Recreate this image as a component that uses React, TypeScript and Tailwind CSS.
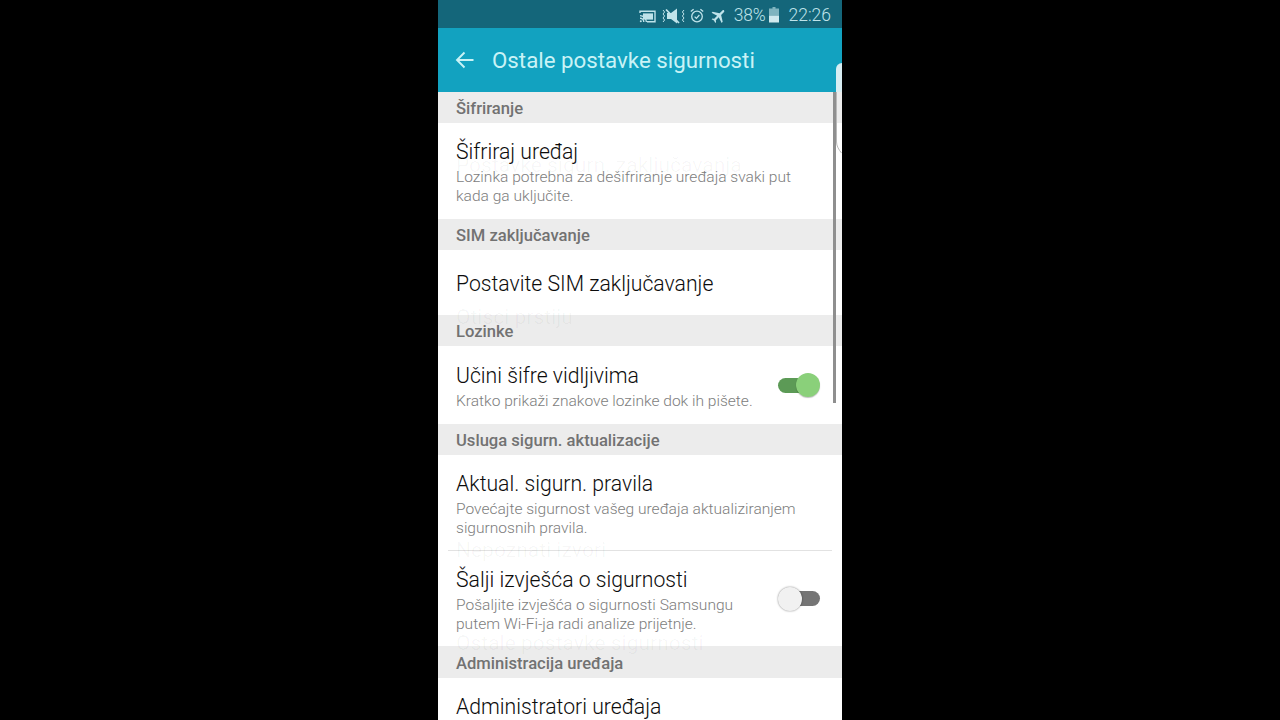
const font = "font-['Roboto',sans-serif]";

function SectionHeader({ label, height = "h-[31px]" }: { label: string; height?: string }) {
  return (
    <div className={`${height} flex items-center px-[18px] bg-[#ececec] text-[16.6px] font-medium text-[#727272] pt-[4px]`}>
      {label}
    </div>
  );
}

function Row({
  title,
  sub,
  height,
  toggle,
}: {
  title: string;
  sub?: string[];
  height: string;
  toggle?: "on" | "off";
}) {
  return (
    <div className={`${height} flex items-center justify-between pl-[18px] pr-[22px] bg-white`}>
      <div className="pt-[3px]">
        <div className="text-[21.2px] leading-[26px] text-[#0c0c0c] font-light">{title}</div>
        {sub && (
          <div className="text-[15.55px] leading-[19px] text-[#7d7d7d] mt-[3px] font-light">
            {sub.map((s) => (
              <div key={s}>{s}</div>
            ))}
          </div>
        )}
      </div>
      {toggle === "on" && (
        <div className="relative w-[42px] h-[24px] flex items-center">
          <div className="w-[38px] h-[15px] rounded-full bg-[#5c9a56]" />
          <div className="absolute right-0 top-0 w-[24px] h-[24px] rounded-full bg-[#8ad07a] shadow-[0_1px_1px_rgba(0,0,0,0.25)]" />
        </div>
      )}
      {toggle === "off" && (
        <div className="relative w-[42px] h-[24px] flex items-center justify-end">
          <div className="w-[38px] h-[15px] rounded-full bg-[#757575]" />
          <div className="absolute left-0 top-0 w-[24px] h-[24px] rounded-full bg-[#f1f1f1] shadow-[0_0_2px_rgba(0,0,0,0.5)]" />
        </div>
      )}
    </div>
  );
}

function StatusIcons() {
  return (
    <div className="flex items-center text-[#bfe3ea] pt-[2px]">
      {/* cast */}
      <svg width="17" height="13" viewBox="0 0 17 13" fill="none" stroke="currentColor" strokeWidth="1.4" className="mr-[6px] mt-[2px]">
        <path d="M1 3V1.2h15v10.6H8" />
        <rect x="4" y="3.4" width="10" height="6.2" fill="currentColor" stroke="none" />
        <path d="M1 5.6a6.4 6.4 0 0 1 6.4 6.4M1 8.2a3.8 3.8 0 0 1 3.8 3.8" />
        <circle cx="1.8" cy="11.2" r="1" fill="currentColor" stroke="none" />
      </svg>
      {/* vibrate off */}
      <svg width="23" height="16" viewBox="0 0 23 16" fill="none" stroke="currentColor" className="mr-[5px] mt-[1px]">
        <path d="M5 5h4l6-4.5v15L9 11H5z" fill="currentColor" stroke="none" />
        <path d="M4 1.5L17 15" strokeWidth="1.8" />
        <path d="M1 2l1.6 2L1 6l1.6 2L1 10l1.6 2L1 14M22 2l-1.6 2L22 6l-1.6 2L22 10l-1.6 2L22 14" strokeWidth="1" />
      </svg>
      {/* alarm */}
      <svg width="14" height="15" viewBox="0 0 14 15" fill="none" stroke="currentColor" strokeWidth="1.3" className="mr-[6px] mt-[1px]">
        <circle cx="7" cy="8.5" r="5.3" />
        <path d="M4.6 8.6l1.8 1.8 3-3.4M.8 3.6L3.6 1.2M13.2 3.6L10.4 1.2" />
      </svg>
      {/* airplane */}
      <svg width="18" height="18" viewBox="0 0 24 24" fill="currentColor" className="mr-[6px] mt-[1px] rotate-45">
        <path d="M21 16v-2l-8-5V3.5c0-.83-.67-1.5-1.5-1.5S10 2.67 10 3.5V9l-8 5v2l8-2.5V19l-2 1.5V22l3.5-1 3.5 1v-1.5L13 19v-5.5l8 2.5z" />
      </svg>
      <span className="text-[17.5px] tracking-[-0.2px] font-light">38%</span>
      {/* battery */}
      <svg width="10" height="16" viewBox="0 0 10 16" className="ml-[4px] mr-[9px]">
        <rect x="3.5" y="0" width="3" height="2" fill="#7fb4bf" />
        <rect x="0" y="1.5" width="10" height="7" fill="#7fb4bf" />
        <rect x="0" y="8.5" width="10" height="7" fill="#cfe9ee" />
      </svg>
      <span className="text-[17.5px] font-light">22:26</span>
    </div>
  );
}

// faint leftovers of the previous screen, still fading out in the video frame
const ghosts = [
  { text: "Postavke sigurn. zaključavanja", cls: "left-[18px] top-[152px] text-[21px]" },
  { text: "Otisci prstiju", cls: "left-[18px] top-[304px] text-[21px]" },
  { text: "Nepoznati izvori", cls: "left-[18px] top-[537px] text-[21px]" },
  { text: "Ostale postavke sigurnosti", cls: "left-[18px] top-[630px] text-[21px]" },
];

export default function App() {
  return (
    <div className={`${font} h-screen bg-black flex justify-center overflow-hidden`}>
      <div className="relative w-[404px] h-[720px] overflow-hidden bg-white">
        <div className="h-[28px] bg-[#14667a] flex items-center justify-end pr-[11px]">
          <StatusIcons />
        </div>
        <div className="h-[64px] bg-[#12a2c0] flex items-center pl-[17px] text-[#c9f3f6]">
          <svg width="20" height="20" viewBox="0 0 20 20" fill="none" stroke="currentColor" strokeWidth="1.9" className="mr-[17px]">
            <path d="M18.5 10H2M9.5 2.5L2 10l7.5 7.5" />
          </svg>
          <span className="text-[22.3px] pt-[2px]">Ostale postavke sigurnosti</span>
        </div>

        <SectionHeader label="Šifriranje" />
        <Row
          height="h-[96px]"
          title="Šifriraj uređaj"
          sub={["Lozinka potrebna za dešifriranje uređaja svaki put", "kada ga uključite."]}
        />
        <SectionHeader label="SIM zaključavanje" />
        <Row height="h-[65px]" title="Postavite SIM zaključavanje" />
        <SectionHeader label="Lozinke" />
        <Row
          height="h-[78px]"
          title="Učini šifre vidljivima"
          sub={["Kratko prikaži znakove lozinke dok ih pišete."]}
          toggle="on"
        />
        <SectionHeader label="Usluga sigurn. aktualizacije" />
        <Row
          height="h-[95px]"
          title="Aktual. sigurn. pravila"
          sub={["Povećajte sigurnost vašeg uređaja aktualiziranjem", "sigurnosnih pravila."]}
        />
        <div className="h-px mx-[10px] bg-[#e2e2e2]" />
        <Row
          height="h-[95px]"
          title="Šalji izvješća o sigurnosti"
          sub={["Pošaljite izvješća o sigurnosti Samsungu", "putem Wi-Fi-ja radi analize prijetnje."]}
          toggle="off"
        />
        <SectionHeader label="Administracija uređaja" height="h-[32px]" />
        <Row height="h-[55px]" title="Administratori uređaja" />

        {ghosts.map((g) => (
          <div key={g.text} className={`absolute leading-[26px] text-black/[0.035] pointer-events-none ${g.cls}`}>
            {g.text}
          </div>
        ))}

        {/* scrollbar */}
        <div className="absolute left-[395px] top-[92px] w-[3px] h-[311px] bg-[#8f8f8f]" />
        {/* edge of the next screen fading in */}
        <div className="absolute left-[398px] top-[63px] w-[6px] h-[29px] bg-[#d8eef3] rounded-tl-[6px]" />
        <svg width="6" height="62" viewBox="0 0 6 62" fill="none" stroke="#b9b9b9" className="absolute left-[398px] top-[92px]">
          <path d="M0.5 0V50C0.5 54 3 58 5.5 61" />
        </svg>
      </div>
    </div>
  );
}
